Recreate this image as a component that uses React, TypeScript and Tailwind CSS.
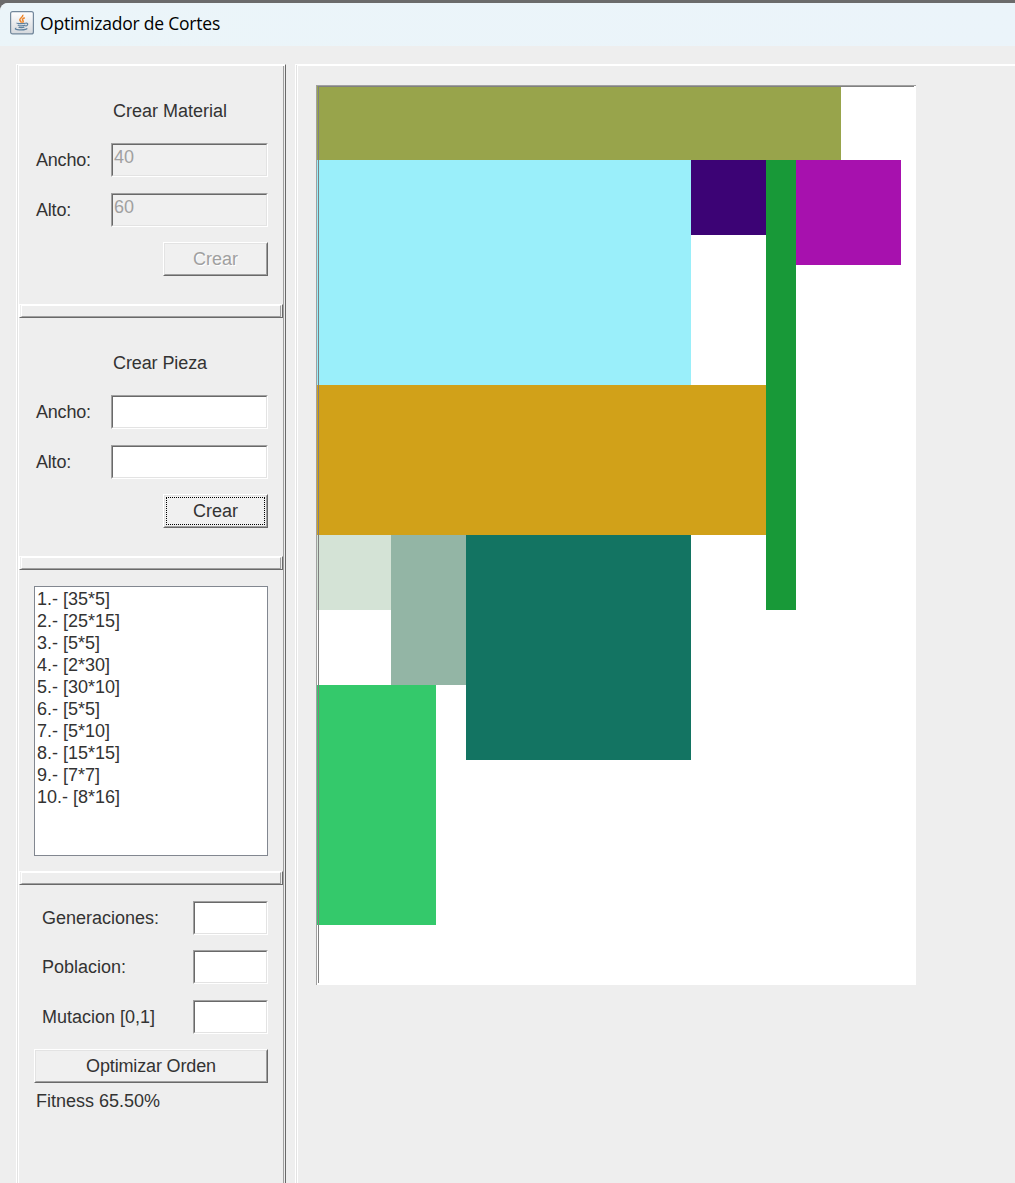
import React from "react";

const sunken =
  "border border-t-[#a0a0a0] border-l-[#a0a0a0] border-r-white border-b-white";
const sunkenInner =
  "h-full w-full border border-t-[#696969] border-l-[#696969] border-r-[#e3e3e3] border-b-[#e3e3e3]";

function Field({ value, wide }: { value?: string; wide?: boolean }) {
  return (
    <div className={`${sunken} h-[34px] shrink-0 ${wide ? "w-[157px]" : "w-[75px]"}`}>
      <div className={`${sunkenInner} pl-px text-[#a0a0a0] leading-[24px] ${value ? "bg-[#f0f0f0]" : "bg-white"}`}>
        {value}
      </div>
    </div>
  );
}

function Button({ label, disabled, focused, full }: { label: string; disabled?: boolean; focused?: boolean; full?: boolean }) {
  return (
    <button
      className={`block h-[34px] border border-t-white border-l-white border-r-[#696969] border-b-[#696969] ${full ? "w-[234px] tracking-[-0.15px]" : "ml-auto w-[105px]"}`}
    >
      <span className="relative flex h-[32px] w-full items-center justify-center border border-t-[#e3e3e3] border-l-[#e3e3e3] border-r-[#a0a0a0] border-b-[#a0a0a0] bg-[#f0f0f0]">
        <span className={disabled ? "text-[#a0a0a0] [text-shadow:1px_1px_0_#fff]" : ""}>{label}</span>
        {focused && <span className="absolute inset-px border border-dotted border-black" />}
      </span>
    </button>
  );
}

function Divider() {
  return (
    <div className="h-[14px] w-[264px] shrink-0 border border-t-white border-l-white border-r-[#696969] border-b-[#696969] px-px">
      <div className="h-full w-full border border-t-white border-l-white border-r-[#a0a0a0] border-b-[#a0a0a0]" />
    </div>
  );
}

function Form({ title, values, disabled }: { title: string; values?: string[]; disabled?: boolean }) {
  return (
    <div className="h-[238px] shrink-0 pl-[17px] pr-[15px]">
      <h2 className={`h-[77px] pl-[77px] pt-[34px] leading-[22px] ${disabled ? "" : "tracking-[-0.1px]"}`}>{title}</h2>
      {["Ancho:", "Alto:"].map((l, i) => (
        <div key={l} className="mb-4 flex h-[34px] items-center justify-between">
          <span className="tracking-[-0.2px]">{l}</span>
          <Field wide value={values?.[i]} />
        </div>
      ))}
      <div className="-mt-px">
        <Button label="Crear" disabled={disabled} focused={!disabled} />
      </div>
    </div>
  );
}

const pieces = ["35*5", "25*15", "5*5", "2*30", "30*10", "5*5", "5*10", "15*15", "7*7", "8*16"];

// Placed pieces on the sheet: [left, top, width, height, colour]
const placed: [number, number, number, number, string][] = [
  [0, 0, 35, 5, "bg-[#98a44b]"],
  [0, 5, 25, 15, "bg-[#9aeffa]"],
  [25, 5, 5, 5, "bg-[#3c0375]"],
  [30, 5, 2, 30, "bg-[#189938]"],
  [0, 20, 30, 10, "bg-[#d1a119]"],
  [0, 30, 5, 5, "bg-[#d4e3d6]"],
  [5, 30, 5, 10, "bg-[#93b5a5]"],
  [10, 30, 15, 15, "bg-[#137462]"],
  [32, 5, 7, 7, "bg-[#a711ae]"],
  [0, 40, 8, 16, "bg-[#34c96b]"],
];

const UNIT = 15;

function JavaIcon() {
  return (
    <svg className="-mt-[3px]" width="24" height="24" viewBox="0 0 24 24" fill="none">
      <defs>
        <linearGradient id="tile" x1="0" y1="0" x2="0" y2="1">
          <stop offset="0" stopColor="#ffffff" />
          <stop offset="1" stopColor="#d5d8dc" />
        </linearGradient>
      </defs>
      <rect x="0.6" y="0.6" width="22.8" height="22.3" rx="2" fill="url(#tile)" stroke="#73889c" strokeWidth="1.2" />
      <path d="M12.8 3.8c.8 2.3-3.6 3.4-3 5.3.3.9 1.4 1.5 1.7 2.6M14.8 6.8c-2.5 1-2.8 1.9-1.9 2.8.7.7.2 1.5-.5 2" stroke="#ee8529" strokeWidth="1.5" />
      <path d="M7.2 11.9c-1.2.8 6.5 1 9 .1M7.8 14c.7 1.1 6.2 1.1 7.6 0M8.6 16c.7.8 4.4.9 5.8 0M16 12.2c2.8-.5 2 2.4-.6 2.9M6.4 17c-5.2 2 9.6 2.7 10.8.4" stroke="#5e819f" strokeWidth="1.2" />
    </svg>
  );
}

export default function App() {
  return (
    <div className="h-[1183px] w-[1015px] overflow-hidden bg-[#6b6b6b] pt-[3px] font-['Liberation_Sans',Arial,sans-serif] text-[18px] leading-[22px] text-[#333]">
      <div className="flex h-[1180px] flex-col rounded-tl-[8px] bg-[#eee]">
        <header className="flex h-[43px] shrink-0 items-center gap-[6px] rounded-tl-[8px] bg-gradient-to-r from-[#ebf5f9] to-[#ebf4fa] pl-[10px]">
          <JavaIcon />
          <h1 className="-mt-[4px] font-['Open_Sans','Noto_Sans',sans-serif] text-[17.5px] tracking-[-0.22px] text-black">Optimizador de Cortes</h1>
        </header>
        <div className="flex min-h-0 grow gap-[9px] pl-4 pt-[18px]">
          <aside className="h-[1140px] w-[270px] shrink-0 border-l border-t border-r border-white border-r-[#696969]">
            <div className="h-full border-l border-[#e3e3e3]">
              <div className="flex h-full flex-col border-l border-t border-white pr-px">
                <div className="flex h-full w-[265px] flex-col border-r border-[#a0a0a0]">
                  <Form title="Crear Material" values={["40", "60"]} disabled />
                  <Divider />
                  <Form title="Crear Pieza" />
                  <Divider />
                  <ul className="mb-[15px] ml-[15px] mt-4 h-[270px] w-[234px] shrink-0 border border-[#828790] bg-white pl-[2px] pt-px">
                    {pieces.map((p, i) => (
                      <li key={i}>{`${i + 1}.- [${p}]`}</li>
                    ))}
                  </ul>
                  <Divider />
                  <div className="flex flex-col gap-[15px] pb-[15px] pl-[23px] pr-[15px] pt-4">
                    {["Generaciones:", "Poblacion:", "Mutacion [0,1]"].map((l) => (
                      <div key={l} className="flex h-[34px] items-center justify-between last:mt-px">
                        <span>{l}</span>
                        <Field />
                      </div>
                    ))}
                  </div>
                  <div className="pl-[15px]">
                    <Button label="Optimizar Orden" full />
                    <p className="pl-[2px] pt-[7px]">Fitness 65.50%</p>
                  </div>
                </div>
              </div>
            </div>
          </aside>
          <main className="h-[1140px] grow border-l border-t border-white">
            <div className="h-full border-l border-[#e3e3e3]">
              <div className="h-full border-l border-t border-white pl-[18px] pt-[19px]">
                <div className="relative h-[900px] w-[600px] overflow-hidden bg-white">
                  {placed.map(([x, y, w, h, color], i) => (
                    <div
                      key={i}
                      className={`absolute ${color}`}
                      style={{ left: x * UNIT, top: y * UNIT, width: w * UNIT, height: h * UNIT }}
                    />
                  ))}
                  <div className="absolute inset-0 border-l border-t border-[#a0a0a0]" />
                  <div className="absolute bottom-[2px] left-[2px] right-[2px] top-px border-l border-t border-[#808080]" />
                </div>
              </div>
            </div>
          </main>
        </div>
      </div>
    </div>
  );
}
